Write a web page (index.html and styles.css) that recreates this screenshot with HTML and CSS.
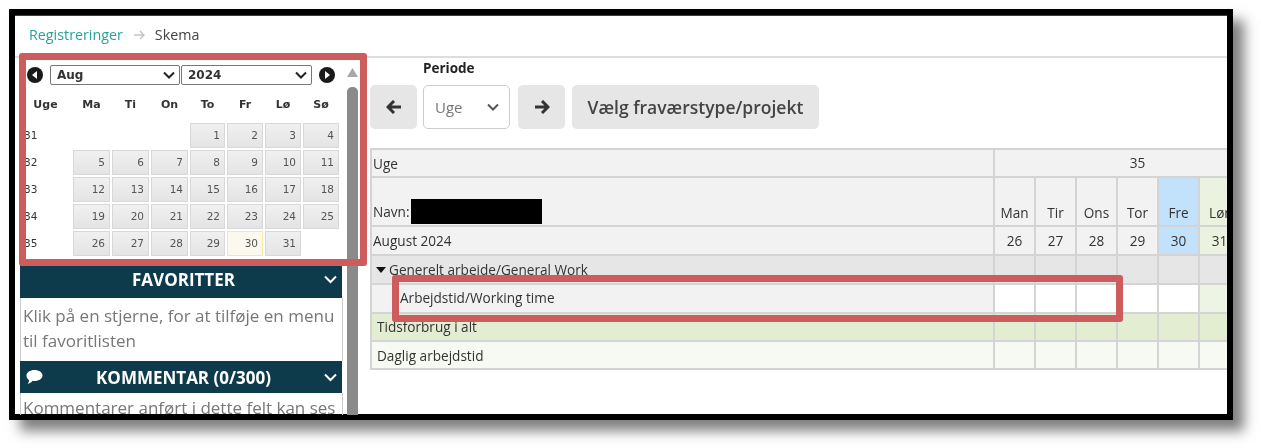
FILE: index.html
```html
<!DOCTYPE html>
<html>
    <head>
        <title>Skema</title>
        <link rel="stylesheet" href="styles.css">
    </head>
    <body>
      <div class="frame">
        <div class="topBar">
          <span class="crumbLink">Registreringer</span>
          <svg class="crumbArrow" width="13" height="10" viewBox="0 0 13 10"><path d="M1 5h10M7 1l4 4-4 4" fill="none" stroke="#c4c4c4" stroke-width="1.4"/></svg>
          <span class="crumbHere">Skema</span>
        </div>

        <div class="main">
          <div class="sidebar">
            <div class="sideContent">
              <!-- Calendar -->
              <div class="calNav">
                <svg class="calBtn" width="16" height="16" viewBox="0 0 16 16"><circle cx="8" cy="8" r="8" fill="#1a1a1a"/><path d="M10 4v8L5 8z" fill="#fff"/></svg>
                <div class="calSelect month"><span>Aug</span><svg width="12" height="8" viewBox="0 0 12 8"><path d="M1 1.5l5 5 5-5" fill="none" stroke="#222" stroke-width="2"/></svg></div>
                <div class="calSelect year"><span>2024</span><svg width="12" height="8" viewBox="0 0 12 8"><path d="M1 1.5l5 5 5-5" fill="none" stroke="#222" stroke-width="2"/></svg></div>
                <svg class="calBtn next" width="16" height="16" viewBox="0 0 16 16"><circle cx="8" cy="8" r="8" fill="#1a1a1a"/><path d="M6 4v8l5-4z" fill="#fff"/></svg>
              </div>
              <div class="calHead">
                <span>Uge</span><span>Ma</span><span>Ti</span><span>On</span><span>To</span><span>Fr</span><span>Lø</span><span>Sø</span>
              </div>
              <div class="calGrid">
                <span class="wk">31</span><i></i><i></i><i></i><b>1</b><b>2</b><b>3</b><b>4</b>
                <span class="wk">32</span><b>5</b><b>6</b><b>7</b><b>8</b><b>9</b><b>10</b><b>11</b>
                <span class="wk">33</span><b>12</b><b>13</b><b>14</b><b>15</b><b>16</b><b>17</b><b>18</b>
                <span class="wk">34</span><b>19</b><b>20</b><b>21</b><b>22</b><b>23</b><b>24</b><b>25</b>
                <span class="wk">35</span><b>26</b><b>27</b><b>28</b><b>29</b><b class="today">30</b><b>31</b><i></i>
              </div>

              <!-- Favourites -->
              <div class="panelHead">
                <span class="panelIcon"></span>
                <span>FAVORITTER</span>
                <svg width="13" height="9" viewBox="0 0 13 9"><path d="M1 1.500l5.500 5.500 5.500-5.500" fill="none" stroke="#fff" stroke-width="2"/></svg>
              </div>
              <div class="panelBody favBody">Klik på en stjerne, for at tilføje en menu til favoritlisten</div>

              <!-- Comment -->
              <div class="panelHead commentHead">
                <svg class="panelIcon" width="17" height="16" viewBox="0 0 17 16"><path d="M8.500 1C13 1 16.500 3.400 16.500 6.500S13 12 8.500 12c-.7 0-1.300 0-1.900-.2C5.300 13.500 3.500 14.500 1.500 15c.9-1 1.500-2.200 1.600-3.800C1.500 10.200.5 8.500.5 6.500.5 3.400 4 1 8.500 1z" fill="#fff"/></svg>
                <span>KOMMENTAR (0/300)</span>
                <svg width="13" height="9" viewBox="0 0 13 9"><path d="M1 1.500l5.500 5.500 5.500-5.500" fill="none" stroke="#fff" stroke-width="2"/></svg>
              </div>
              <div class="panelBody commentBody">Kommentarer anført i dette felt kan ses</div>
            </div>
            <div class="scrollbar">
              <svg width="11" height="9" viewBox="0 0 11 9"><path d="M5.500 0l5.500 9H0z" fill="#a8a8a8"/></svg>
              <div class="thumb"></div>
            </div>
          </div>

          <div class="content">
            <div class="periodLabel">Periode</div>
            <div class="toolbar">
              <div class="btn arrowBtn"><svg width="16" height="14" viewBox="0 0 16 14"><path d="M8 1L2 7l6 6M2.500 7H15" fill="none" stroke="#333" stroke-width="3"/></svg></div>
              <div class="periodSelect"><span>Uge</span><svg width="12" height="8" viewBox="0 0 12 8"><path d="M1 1.500l5 5 5-5" fill="none" stroke="#555" stroke-width="2"/></svg></div>
              <div class="btn arrowBtn nextBtn"><svg width="16" height="14" viewBox="0 0 16 14"><path d="M8 1l6 6-6 6M13.500 7H1" fill="none" stroke="#333" stroke-width="3"/></svg></div>
              <div class="btn textBtn">Vælg fraværstype/projekt</div>
            </div>

            <table class="schedule">
              <colgroup>
                <col class="nameCol">
                <col class="dayCol"><col class="dayCol"><col class="dayCol"><col class="dayCol"><col class="dayCol"><col class="dayCol"><col class="dayCol">
              </colgroup>
              <tr class="rowWeek">
                <td>Uge</td>
                <td colspan="7" class="mid">35</td>
              </tr>
              <tr class="rowDays">
                <td>Navn:<span class="redacted"></span></td>
                <td class="mid">Man</td><td class="mid">Tir</td><td class="mid">Ons</td><td class="mid">Tor</td><td class="mid today">Fre</td><td class="mid weekend">Lør</td><td class="weekend"></td>
              </tr>
              <tr class="rowDates">
                <td>August 2024</td>
                <td class="mid">26</td><td class="mid">27</td><td class="mid">28</td><td class="mid">29</td><td class="mid today">30</td><td class="mid weekend">31</td><td class="weekend"></td>
              </tr>
              <tr class="rowGroup">
                <td><svg class="caret" width="10" height="6" viewBox="0 0 10 6"><path d="M0 0h10L5 6z" fill="#111"/></svg>Generelt arbejde/General Work</td>
                <td></td><td></td><td></td><td></td><td></td><td></td><td></td>
              </tr>
              <tr class="rowTask">
                <td class="taskName">Arbejdstid/Working time</td>
                <td></td><td></td><td></td><td></td><td></td><td class="weekend"></td><td class="weekend"></td>
              </tr>
              <tr class="rowTotal">
                <td class="sumName">Tidsforbrug i alt</td>
                <td></td><td></td><td></td><td></td><td></td><td></td><td></td>
              </tr>
              <tr class="rowDaily">
                <td class="sumName">Daglig arbejdstid</td>
                <td></td><td></td><td></td><td></td><td></td><td></td><td></td>
              </tr>
            </table>
          </div>
        </div>

        <!-- Red marks drawn on top of the screenshot -->
        <div class="mark markCalendar"></div>
        <div class="mark markTask"></div>
      </div>
    </body>
</html>
```

FILE: styles.css
```css
* {
  box-sizing: border-box;
}

html, body {
  margin: 0;
  height: 448px;
  overflow: hidden;
  background: #fff;
}

body {
  padding: 9px 0 0 9px;
  font-family: "Open Sans", sans-serif;
  color: #444;
}

/* Black frame with the drop shadow */
.frame {
  position: relative;
  width: 1224px;
  height: 411px;
  border: 6px solid #000;
  background: #fff;
  box-shadow: 11px 11px 12px rgba(0, 0, 0, 0.5);
}

/* The reference is a scaled down screenshot, so its text is a bit soft */
.topBar,
.main {
  filter: blur(0.3px);
}

.topBar {
  display: flex;
  align-items: center;
  height: 43px;
  padding: 0 0 3px 14px;
  border-top: 1px solid #1d4a58;
  border-bottom: 2px solid #ddd;
  font-size: 14.300px;
}

.crumbLink {
  color: #2aa198;
}

.crumbArrow {
  margin: 0 9px 0 10px;
}

.crumbHere {
  color: #444;
}

.main {
  display: flex;
  height: 357px;
  overflow: hidden;
}

/* Left column */
.sidebar {
  display: flex;
  width: 338px;
  margin-left: 5px;
  flex: none;
}

.sideContent {
  width: 323px;
  overflow: hidden;
}

.calNav {
  display: flex;
  align-items: center;
  height: 20px;
  margin-top: 7px;
  padding-left: 7px;
}

.calSelect {
  display: flex;
  align-items: center;
  justify-content: space-between;
  height: 20px;
  padding: 0 4px 0 6px;
  border: 1px solid #777;
  border-radius: 2px;
  font-family: "DejaVu Sans", sans-serif;
  font-weight: bold;
  font-size: 12px;
  color: #333;
}

.month {
  width: 130px;
  margin-left: 7px;
}

.year {
  width: 131px;
  margin-left: 1px;
}

.calBtn.next {
  margin-left: 7px;
}

.calHead,
.calGrid {
  display: grid;
  grid-template-columns: 51px 37px 37px 37px 35px 36px 36px 36px;
  column-gap: 2px;
  font-family: "DejaVu Sans", sans-serif;
}

.calHead {
  height: 38px;
  align-items: center;
  font-weight: bold;
  font-size: 11px;
  color: #333;
  text-align: center;
}

.calGrid {
  grid-auto-rows: 25px;
  row-gap: 2px;
  margin-bottom: 8px;
  font-size: 10.500px;
}

.calGrid b {
  display: block;
  padding: 5px 4px 0 0;
  border: 1px solid #d8d8d8;
  background: linear-gradient(#f0f0f0, #e4e4e4);
  font-weight: normal;
  text-align: right;
  color: #555;
}

.calGrid b.today {
  border-color: #f6e7a4;
  background: #fbf9ee;
}

.wk {
  padding: 6px 0 0 4px;
  color: #333;
}

.panelHead {
  display: flex;
  align-items: center;
  justify-content: space-between;
  width: 322px;
  height: 34px;
  padding: 0 5px 3px 6px;
  background: #0d3b4c;
  color: #fff;
  font-weight: bold;
  font-size: 17px;
}

.commentHead {
  height: 32px;
  padding-bottom: 0;
}

.panelIcon {
  display: block;
  width: 17px;
}

.panelBody {
  border: 1px solid #ccc;
  border-width: 0 1px;
  font-size: 17px;
  line-height: 25px;
  color: #777;
}

.favBody {
  height: 63px;
  padding: 5px 2px 0 2px;
}

.commentBody {
  padding: 2px 0 0 2px;
  white-space: nowrap;
}

.scrollbar {
  width: 11px;
  margin-left: 4px;
  padding-top: 10px;
}

.scrollbar svg {
  display: block;
}

.thumb {
  height: 340px;
  margin-top: 10px;
  border-radius: 5px 5px 0 0;
  background: #8a8a8a;
}

/* Right column */
.content {
  flex: 1;
  min-width: 0;
  padding-left: 12px;
  overflow: hidden;
}

.periodLabel {
  height: 27px;
  padding-left: 53px;
  font-weight: bold;
  font-size: 13.500px;
  line-height: 20px;
  color: #222;
}

.toolbar {
  display: flex;
  gap: 6px;
  height: 44px;
}

.btn {
  display: flex;
  align-items: center;
  justify-content: center;
  border-radius: 5px;
  background: #e6e6e6;
}

.arrowBtn {
  width: 47px;
}

.nextBtn {
  margin-left: 2px;
}

.textBtn {
  width: 247px;
  margin-left: 1px;
  font-weight: 600;
  font-size: 17.500px;
  color: #444;
}

.periodSelect {
  display: flex;
  align-items: center;
  justify-content: space-between;
  width: 87px;
  padding: 0 10px 0 11px;
  border: 1px solid #ccc;
  border-radius: 5px;
  font-size: 15px;
  color: #777;
}

.schedule {
  table-layout: fixed;
  width: 912px;
  margin-top: 19px;
  border-collapse: separate;
  border-spacing: 0;
  border-top: 2px solid #d4d4d4;
  border-left: 2px solid #d4d4d4;
  font-size: 13.600px;
  color: #333;
}

.nameCol {
  width: 623px;
}

.dayCol {
  width: 41px;
}

.schedule td {
  padding: 0 0 0 1px;
  border-right: 2px solid #d4d4d4;
  border-bottom: 2px solid #d4d4d4;
  background: #f2f2f2;
  line-height: 18px;
  white-space: nowrap;
}

.schedule td.mid {
  padding: 0;
  text-align: center;
}

.rowWeek td {
  height: 28px;
  padding-top: 1px;
}

.rowDays td,
.schedule .rowDays td.mid {
  height: 49px;
  padding-bottom: 3px;
  vertical-align: bottom;
}

.rowDates td {
  height: 29px;
}

.schedule td.today {
  background: #c2e2fb;
}

.schedule td.weekend {
  background: #ebf2df;
}

.redacted {
  display: inline-block;
  width: 131px;
  height: 25px;
  margin-left: 1px;
  margin-bottom: -2px;
  vertical-align: -5px;
  background: #000;
}

.rowGroup td {
  height: 29px;
  background: #e6e6e6;
}

.caret {
  margin: 0 3px 2px 3px;
}

.rowTask td {
  height: 29px;
  padding-bottom: 2px;
  background: #fff;
}

.schedule td.taskName {
  padding-left: 28px;
  background: #f2f2f2;
}

.rowTask td.weekend {
  background: #eef4e4;
}

.rowTotal td {
  height: 28px;
  background: #e3edd2;
}

.rowDaily td {
  height: 28px;
  padding-top: 1px;
  background: #f7faf2;
}

.schedule td.sumName {
  padding-left: 5px;
}

/* Red marks */
.mark {
  position: absolute;
  border: 7px solid #cd5c5c;
  border-radius: 3px;
}

.markCalendar {
  left: 4px;
  top: 38px;
  width: 348px;
  height: 213px;
}

.markTask {
  left: 377px;
  top: 260px;
  width: 731px;
  height: 47px;
}
```
